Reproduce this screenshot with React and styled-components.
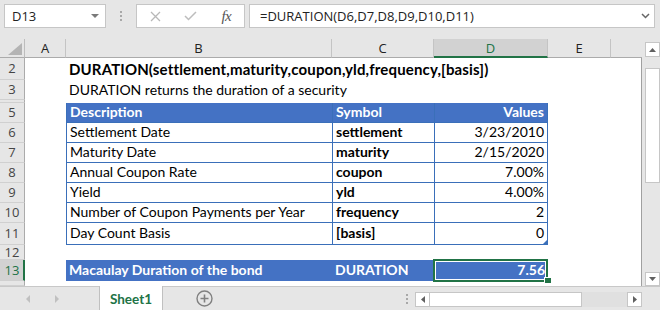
import React from 'react';
import styled, { createGlobalStyle } from 'styled-components';

const GlobalStyle = createGlobalStyle`
  html, body { margin: 0; padding: 0; background: #e6e6e6; }
  body { width: 660px; height: 310px; overflow: hidden; }
  *, *::before, *::after { box-sizing: border-box; }
`;

const BLUE = '#4472C4';
const LINE = '#3a6fb9';
const GREEN = '#217346';
const UI_FONT = '"Open Sans", "Noto Sans", sans-serif';
const CELL_FONT = 'Lato, "Open Sans", sans-serif';

const Window = styled.div`
  width: 660px;
  height: 310px;
  background: #e6e6e6;
  display: flex;
  flex-direction: column;
  overflow: hidden;
  font-family: ${UI_FONT};
`;

/* ---------- formula bar ---------- */
const FormulaBar = styled.div`
  height: 39px;
  flex: none;
  display: flex;
  align-items: flex-start;
  padding: 4px 5px 0 4px;
`;

const NameBox = styled.div`
  width: 102px;
  height: 24px;
  background: #fff;
  border: 1px solid #c6c6c6;
  display: flex;
  align-items: center;
  justify-content: space-between;
  padding: 0 6px 0 7px;
  font-size: 13px;
  color: #222;
`;

const Grip = styled.div`
  width: 30px;
  height: 24px;
  display: flex;
  flex-direction: column;
  align-items: center;
  justify-content: center;
  gap: 2px;
  span {
    width: 2px;
    height: 2px;
    background: #a8a8a8;
  }
`;

const IconBox = styled.div`
  width: 109px;
  height: 24px;
  background: #fff;
  border: 1px solid #c6c6c6;
  display: flex;
  align-items: center;
  padding-left: 1px;
`;

const IconSlot = styled.div`
  width: 36px;
  height: 22px;
  display: flex;
  align-items: center;
  justify-content: center;
`;

const Fx = styled.span`
  font-family: "Liberation Serif", "DejaVu Serif", serif;
  font-style: italic;
  font-size: 15px;
  color: #555;
  letter-spacing: -0.5px;
`;

const FormulaInput = styled.div`
  flex: 1;
  margin-left: 4px;
  height: 24px;
  background: #fff;
  border: 1px solid #c6c6c6;
  display: flex;
  align-items: center;
  justify-content: space-between;
  padding: 0 4px 0 10px;
  font-size: 13px;
  color: #222;
`;

/* ---------- sheet ---------- */
const SheetArea = styled.div`
  height: 247px;
  flex: none;
  display: flex;
`;

const Grid = styled.div`
  width: 642px;
  display: grid;
  grid-template-columns: ${(p) => p.$cols};
  grid-template-rows: ${(p) => p.$rows};
  background: #fff;
  overflow: hidden;
`;

const Corner = styled.div`
  background: #e6e6e6;
  border-right: 1px solid #bdbdbd;
  border-bottom: 1px solid #ababab;
  display: flex;
  align-items: flex-end;
  justify-content: flex-end;
  padding: 0 2px 2px 0;
`;

const ColHead = styled.div`
  background: ${(p) => (p.$active ? '#d2d2d2' : '#e6e6e6')};
  color: ${(p) => (p.$active ? GREEN : '#222')};
  border-right: ${(p) => (p.$last ? 'none' : '1px solid #c4c4c4')};
  border-bottom: ${(p) => (p.$active ? `2px solid ${GREEN}` : '1px solid #ababab')};
  display: flex;
  align-items: center;
  justify-content: center;
  font-size: 13px;
  padding-top: ${(p) => (p.$active ? '1px' : '0')};
`;

const RowHead = styled.div`
  background: ${(p) => (p.$active ? '#d2d2d2' : '#e6e6e6')};
  color: ${(p) => (p.$active ? GREEN : '#444')};
  border-right: ${(p) => (p.$active ? `2px solid ${GREEN}` : '1px solid #ababab')};
  border-bottom: 1px solid #d0d0d0;
  display: flex;
  align-items: center;
  justify-content: center;
  font-size: 13px;
  line-height: 13px;
  padding-left: ${(p) => (p.$active ? '1px' : '0')};
`;

const Cell = styled.div`
  position: relative;
  display: flex;
  align-items: flex-end;
  justify-content: ${(p) => (p.$right ? 'flex-end' : 'flex-start')};
  padding: 0 3px ${(p) => p.$pb || 3}px 3px;
  font-family: ${CELL_FONT};
  font-size: ${(p) => (p.$title ? '15px' : '14px')};
  letter-spacing: ${(p) => (p.$title ? '0.15px' : '0')};
  line-height: 1;
  font-weight: ${(p) => (p.$bold ? 700 : 400)};
  color: ${(p) => (p.$light ? '#fff' : '#000')};
  background: ${(p) => p.$fill || 'transparent'};
  white-space: nowrap;
  border-left: ${(p) => (p.$bl ? `1px solid ${LINE}` : 'none')};
  border-right: ${(p) =>
    p.$br ? `1px solid ${LINE}` : p.$edge ? '1px solid #a0a0a0' : 'none'};
  border-bottom: ${(p) => (p.$bb ? `1px solid ${LINE}` : 'none')};
`;

const Selection = styled.div`
  position: absolute;
  top: -1px;
  left: -1px;
  right: 0;
  bottom: -1px;
  border: 2px solid ${GREEN};
  box-shadow: inset 0 0 0 1px #fff;
  pointer-events: none;
`;

const FillHandle = styled.div`
  position: absolute;
  right: -3px;
  bottom: -2px;
  width: 7px;
  height: 6px;
  background: ${GREEN};
  border-left: 1px solid #fff;
  border-top: 1px solid #fff;
`;

const CornerMark = styled.div`
  position: absolute;
  right: 0;
  bottom: 0;
  width: 4px;
  height: 4px;
  background: ${LINE};
  clip-path: polygon(100% 0, 100% 100%, 0 100%);
`;

const ScrollGap = styled.div`
  width: 3px;
`;

const VScroll = styled.div`
  width: 15px;
  display: flex;
  flex-direction: column;
  padding-top: 3px;
`;

const ScrollButton = styled.div`
  width: 15px;
  height: ${(p) => p.$h || 15}px;
  background: #fff;
  border: 1px solid #c6c6c6;
  display: flex;
  align-items: center;
  justify-content: center;
  flex: none;
`;

const VThumb = styled.div`
  margin-top: 11px;
  height: 115px;
  background: #fff;
  border: 1px solid #c6c6c6;
  flex: none;
`;

const Spacer = styled.div`
  flex: 1;
`;

/* ---------- tab bar ---------- */
const TabBar = styled.div`
  flex: 1;
  display: flex;
  align-items: stretch;
  border-top: 1px solid #c8c8c8;
`;

const TabNav = styled.div`
  width: 99px;
  display: flex;
  align-items: center;
  padding-left: 26px;
  gap: 25px;
`;

const SheetTab = styled.div`
  width: 64px;
  margin-top: -1px;
  background: #fff;
  border-left: 1px solid #c0c0c0;
  border-right: 1px solid #c0c0c0;
  display: flex;
  align-items: center;
  justify-content: center;
  font-family: ${CELL_FONT};
  font-weight: 700;
  font-size: 13.5px;
  color: ${GREEN};
  padding-top: 1px;
`;

const AddSheet = styled.div`
  margin-left: 33px;
  display: flex;
  align-items: center;
`;

const TabGrip = styled(Grip)`
  width: 18px;
  height: auto;
  align-self: center;
  margin-right: -1px;
`;

const HScroll = styled.div`
  width: 227px;
  height: 15px;
  align-self: center;
  margin-top: 2px;
  margin-right: 18px;
  display: flex;
  background: #e0e0e0;
`;

const HButton = styled.div`
  width: 15px;
  height: 15px;
  background: #fff;
  border: 1px solid #c6c6c6;
  display: flex;
  align-items: center;
  justify-content: center;
  flex: none;
`;

const HThumb = styled.div`
  width: 152px;
  background: #fff;
  border: 1px solid #c6c6c6;
  border-left: none;
  flex: none;
`;

/* ---------- data ---------- */
const colLetters = ['A', 'B', 'C', 'D', 'E', 'F'];
const colWidths = [41, 266, 102, 114, 63, 31];

const rows = [
  { n: 2, h: 22, B: 'DURATION(settlement,maturity,coupon,yld,frequency,[basis])', title: true },
  { n: 3, h: 20, B: 'DURATION returns the duration of a security' },
  { n: 4, h: 3 },
  { n: 5, h: 20, kind: 'head', B: 'Description', C: 'Symbol', D: 'Values' },
  { n: 6, h: 20, kind: 'data', B: 'Settlement Date', C: 'settlement', D: '3/23/2010' },
  { n: 7, h: 20, kind: 'data', B: 'Maturity Date', C: 'maturity', D: '2/15/2020' },
  { n: 8, h: 20, kind: 'data', B: 'Annual Coupon Rate', C: 'coupon', D: '7.00%' },
  { n: 9, h: 20, kind: 'data', B: 'Yield', C: 'yld', D: '4.00%' },
  { n: 10, h: 20, kind: 'data', B: 'Number of Coupon Payments per Year', C: 'frequency', D: '2' },
  { n: 11, h: 22, kind: 'data', B: 'Day Count Basis', C: '[basis]', D: '0', mark: true },
  { n: 12, h: 15 },
  { n: 13, h: 21, kind: 'result', B: 'Macaulay Duration of the bond', C: 'DURATION', D: '7.56', active: true },
  { n: 14, h: 5 },
];

const Tri = ({ dir, color = '#666', w = 7, h = 4 }) => {
  const pts = {
    down: `0,0 ${w},0 ${w / 2},${h}`,
    up: `0,${h} ${w},${h} ${w / 2},0`,
    left: `${h},0 ${h},${w} 0,${w / 2}`,
    right: `0,0 0,${w} ${h},${w / 2}`,
  }[dir];
  const vw = dir === 'left' || dir === 'right' ? h : w;
  const vh = dir === 'left' || dir === 'right' ? w : h;
  return (
    <svg width={vw} height={vh} viewBox={`0 0 ${vw} ${vh}`}>
      <polygon points={pts} fill={color} />
    </svg>
  );
};

function renderCells(r) {
  const out = [];
  colLetters.forEach((c) => {
    const key = `${r.n}-${c}`;
    const inTable = r.kind === 'head' || r.kind === 'data';
    const isBlue = r.kind === 'head' || r.kind === 'result';
    const text = r[c];
    const props = {};
    if (inTable && (c === 'B' || c === 'C' || c === 'D')) {
      props.$bl = true;
      props.$bb = true;
      if (c === 'D') props.$br = true;
    }
    if (isBlue && (c === 'B' || c === 'C' || c === 'D')) {
      props.$fill = BLUE;
      props.$light = true;
      props.$bold = true;
    }
    if (r.kind === 'data' && c === 'C') props.$bold = true;
    if (r.title && c === 'B') {
      props.$bold = true;
      props.$title = true;
    }
    if (c === 'D' && r.kind) props.$right = true;
    if (c === 'F') props.$edge = true;
    if (r.h === 22 && r.kind) props.$pb = 4;
    if (r.kind === 'result') props.$pb = 4;
    out.push(
      <Cell key={key} {...props}>
        {text}
        {r.mark && c === 'D' && <CornerMark />}
        {r.active && c === 'D' && (
          <>
            <Selection />
            <FillHandle />
          </>
        )}
      </Cell>
    );
  });
  return out;
}

export default function App() {
  const gridCols = ['25px', ...colWidths.map((w) => `${w}px`)].join(' ');
  const gridRows = ['19px', ...rows.map((r) => `${r.h}px`)].join(' ');

  return (
    <>
      <GlobalStyle />
      <Window>
        <FormulaBar>
          <NameBox>
            <span>D13</span>
            <Tri dir="down" color="#7a7a7a" w={8} h={4} />
          </NameBox>
          <Grip>
            <span />
            <span />
            <span />
          </Grip>
          <IconBox>
            <IconSlot>
              <svg width="11" height="11" viewBox="0 0 11 11">
                <path d="M1 1 L10 10 M10 1 L1 10" stroke="#b8b8b8" strokeWidth="1.3" fill="none" />
              </svg>
            </IconSlot>
            <IconSlot>
              <svg width="13" height="10" viewBox="0 0 13 10">
                <path d="M1 5 L4.5 8.5 L12 1" stroke="#bdbdbd" strokeWidth="1.5" fill="none" />
              </svg>
            </IconSlot>
            <IconSlot>
              <Fx>fx</Fx>
            </IconSlot>
          </IconBox>
          <FormulaInput>
            <span>=DURATION(D6,D7,D8,D9,D10,D11)</span>
            <svg width="9" height="6" viewBox="0 0 9 6">
              <path d="M1 1 L4.5 4.5 L8 1" stroke="#666" strokeWidth="1.5" fill="none" />
            </svg>
          </FormulaInput>
        </FormulaBar>

        <SheetArea>
          <Grid $cols={gridCols} $rows={gridRows}>
            <Corner>
              <svg width="14" height="12" viewBox="0 0 14 12">
                <polygon points="14,0 14,12 0,12" fill="#b4b4b4" />
              </svg>
            </Corner>
            {colLetters.map((c, i) => (
              <ColHead key={c} $active={c === 'D'} $last={i === colLetters.length - 1}>
                {c === 'F' ? '' : c}
              </ColHead>
            ))}
            {rows.map((r) => (
              <React.Fragment key={r.n}>
                <RowHead $active={r.active}>{r.h >= 15 ? r.n : ''}</RowHead>
                {renderCells(r)}
              </React.Fragment>
            ))}
          </Grid>
          <ScrollGap />
          <VScroll>
            <ScrollButton>
              <Tri dir="up" color="#606060" w={7} h={4} />
            </ScrollButton>
            <VThumb />
            <Spacer />
            <ScrollButton $h={14}>
              <Tri dir="down" color="#606060" w={7} h={4} />
            </ScrollButton>
          </VScroll>
        </SheetArea>

        <TabBar>
          <TabNav>
            <Tri dir="left" color="#c0c0c0" w={8} h={4} />
            <Tri dir="right" color="#c0c0c0" w={8} h={4} />
          </TabNav>
          <SheetTab>Sheet1</SheetTab>
          <AddSheet>
            <svg width="17" height="17" viewBox="0 0 17 17">
              <circle cx="8.5" cy="8.5" r="7.5" stroke="#808080" strokeWidth="1.4" fill="none" />
              <path d="M8.5 4.5 V12.5 M4.5 8.5 H12.5" stroke="#808080" strokeWidth="1.6" />
            </svg>
          </AddSheet>
          <Spacer />
          <TabGrip>
            <span />
            <span />
            <span />
          </TabGrip>
          <HScroll>
            <HButton>
              <Tri dir="left" color="#606060" w={7} h={4} />
            </HButton>
            <HThumb />
            <Spacer />
            <HButton>
              <Tri dir="right" color="#606060" w={7} h={4} />
            </HButton>
          </HScroll>
        </TabBar>
      </Window>
    </>
  );
}
